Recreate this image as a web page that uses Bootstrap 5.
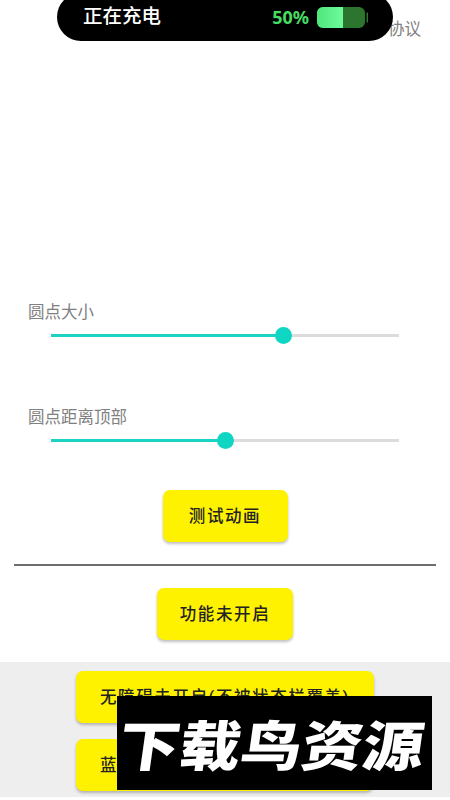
<!DOCTYPE html>
<html lang="zh">
<head>
<meta charset="utf-8">
<link href="https://cdn.jsdelivr.net/npm/bootstrap@5.3.0/dist/css/bootstrap.min.css" rel="stylesheet">
<style>
html,body{height:800px;overflow:hidden}
body{font-family:"Roboto","Noto Sans CJK SC",sans-serif;background:#fff;position:relative}
.pill-bar{position:absolute;left:57px;top:-7px;width:336px;height:48px;background:#000;border-radius:24px;padding:0 25px 0 26px;z-index:5}
.pill-title{color:#fff;font-size:19.5px;font-weight:500;line-height:34px}
.pill-pct{color:#46dc64;font-size:18px;font-weight:700;line-height:34px;font-family:"Noto Sans","Noto Sans CJK SC",sans-serif}
.agree-line{height:59px;padding:20px 29px 0 0;font-size:16.5px;line-height:20px;color:#808080}
.cv-area{height:243px}
.lbl{font-size:16.5px;line-height:22px;color:#808080;padding-left:28px}
.slide-wrap{padding:0 51px;height:24px;margin-top:-1px}
.slide-wrap input{display:block;width:100%;height:24px;margin:0;background:transparent;-webkit-appearance:none;appearance:none}
.slide-wrap input::-webkit-slider-runnable-track{height:3px;background:linear-gradient(to right,#1cd3c3 var(--v),#dcdcdc var(--v))}
.slide-wrap input::-webkit-slider-thumb{-webkit-appearance:none;width:17px;height:17px;margin-top:-7px;border-radius:50%;background:#0fd6c2;border:0;box-shadow:none}
.gap-one{height:60px}
.btn-row-first{margin-top:38px}
.yb{background:#fff200;color:#222;border:0;border-radius:7px;height:52px;font-size:16.5px;font-weight:500;letter-spacing:1.6px;box-shadow:0 2px 3px rgba(0,0,0,.25);padding:3px 0 0;display:block}
.yb:hover{background:#fff200;color:#222}
.b-test{width:125px}
.b-func{width:136px}
.b-wide{width:298px}
.b-wide-low{width:297px;margin-right:1px;text-align:left;padding-left:24px}
.rule{height:2px;background:#6e6e6e;margin:22px 14px 22px;opacity:1;border:0}
.grey-zone{margin-top:22px;background:#eee;height:135px;padding-top:9px}
.grey-zone .yb+.yb{margin-top:16px}
.stamp{position:absolute;left:117px;top:696px;width:315px;height:94px;background:#000;z-index:6}
.stamp-txt{color:#fff;font-size:54px;font-weight:900;line-height:94px;white-space:nowrap;transform:skewX(-8deg) scaleX(1.13);font-family:"Noto Sans CJK SC",sans-serif;width:270px;margin-left:20px}
</style>
</head>
<body>
<div class="pill-bar d-flex align-items-center justify-content-between">
  <span class="pill-title">正在充电</span>
  <span class="d-flex align-items-center gap-2">
    <span class="pill-pct">50%</span>
    <svg width="51" height="21" viewBox="0 0 51 21"><defs><linearGradient id="cg" x1="0" x2="1" y1="0" y2="0"><stop offset="0" stop-color="#4fe67c"/><stop offset="1" stop-color="#6dfb9c"/></linearGradient></defs><rect x="0" y="0" width="48" height="21" rx="6" fill="#2b752f"/><path d="M6 0H26V21H6A6 6 0 0 1 0 15V6A6 6 0 0 1 6 0Z" fill="url(#cg)"/><rect x="49.5" y="5.5" width="1.5" height="10" fill="#2b752f"/></svg>
  </span>
</div>
<div class="agree-line text-end">用户协议</div>
<div class="cv-area"></div>
<div class="lbl">圆点大小</div>
<div class="slide-wrap"><input type="range" min="0" max="100" step="0.1" value="67.6" style="--v:67%"></div>
<div class="gap-one"></div>
<div class="lbl">圆点距离顶部</div>
<div class="slide-wrap"><input type="range" min="0" max="100" value="50" style="--v:50%"></div>
<div class="d-flex justify-content-center btn-row-first"><button class="btn yb b-test">测试动画</button></div>
<hr class="rule">
<div class="d-flex justify-content-center"><button class="btn yb b-func">功能未开启</button></div>
<div class="grey-zone d-flex flex-column align-items-center">
  <button class="btn yb b-wide">无障碍未开启(不被状态栏覆盖)</button>
  <button class="btn yb b-wide-low">蓝牙未开启</button>
</div>
<div class="stamp"><div class="stamp-txt">下载鸟资源</div></div>
<script src="https://cdn.jsdelivr.net/npm/bootstrap@5.3.0/dist/js/bootstrap.bundle.min.js"></script>
</body>
</html>
